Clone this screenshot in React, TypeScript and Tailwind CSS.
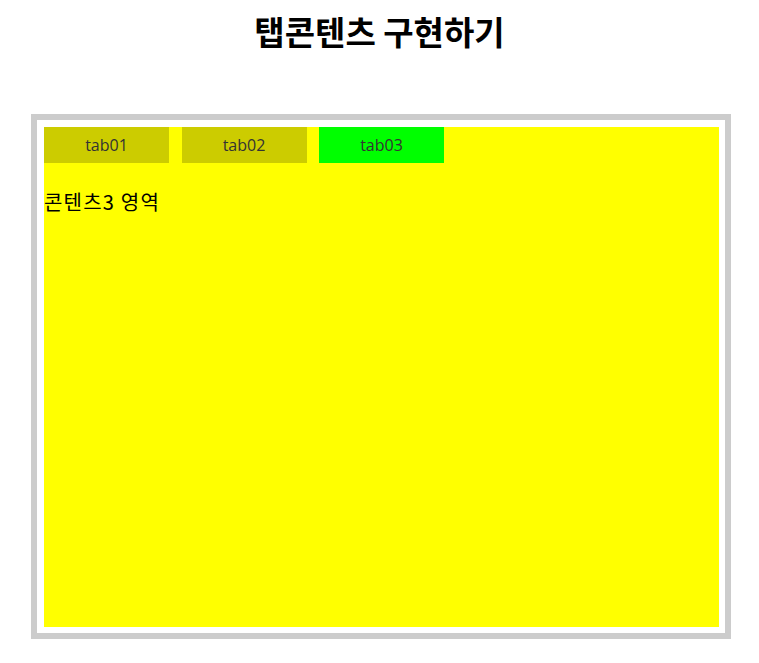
import { useState } from "react"

const tabs = [
	{ id: 1, label: "tab01", content: "콘텐츠1 영역" },
	{ id: 2, label: "tab02", content: "콘텐츠2 영역" },
	{ id: 3, label: "tab03", content: "콘텐츠3 영역" }
]

const App = () => {
	const [active, setActive] = useState(3)
	const current = tabs.find(tab => tab.id === active)

	return (
		<div className="min-h-screen bg-white text-black font-['Segoe_UI','Open_Sans','Noto_Sans_CJK_KR',sans-serif]">
			<h1 className="pt-[8px] text-center text-[33px] font-bold leading-[46px] font-['Noto_Sans_CJK_KR',sans-serif]">
				탭콘텐츠 구현하기
			</h1>

			<div className="mt-[60px] ml-[31px] w-[700px] border-[6px] border-[#cccccc] pt-[7px] pl-[7px] pr-[6px] pb-[6px]">
				<div className="h-[500px] bg-[#ffff00]">
					<ul className="flex gap-[12.5px]">
						{tabs.map(tab => (
							<li key={tab.id}>
								<button
									type="button"
									onClick={() => setActive(tab.id)}
									className={`flex h-[36px] w-[125px] items-center justify-center text-[16px] text-[#333333] ${
										active === tab.id ? "bg-[#00ff00]" : "bg-[#cccc00]"
									}`}
								>
									{tab.label}
								</button>
							</li>
						))}
					</ul>

					<p className="mt-[25px] text-[20px] leading-[28px] tracking-[1.2px] font-['Noto_Sans_CJK_KR',sans-serif]">
						{current?.content}
					</p>
				</div>
			</div>
		</div>
	)
}

export default App
